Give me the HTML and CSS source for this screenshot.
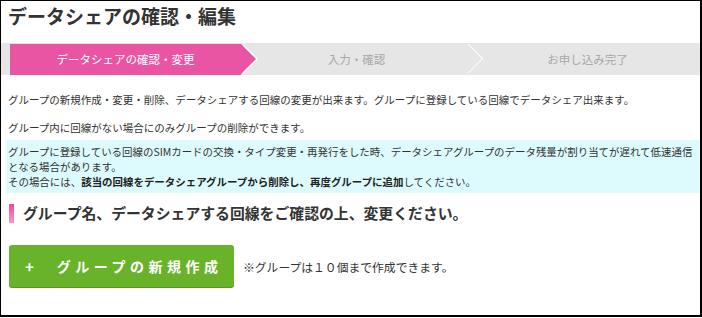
FILE: index.html
```html
<!DOCTYPE html>
<html lang="ja">
<head>
<meta charset="utf-8">
<title>データシェアの確認・編集</title>
<link rel="stylesheet" href="styles.css">
</head>
<body>
<div class="frame">
  <h1 class="title">データシェアの確認・編集</h1>
  <div class="steps">
    <div class="step active">データシェアの確認・変更</div>
    <div class="step sep">入力・確認</div>
    <div class="step">お申し込み完了</div>
  </div>
  <div class="content">
    <p class="para first">グループの新規作成・変更・削除、データシェアする回線の変更が出来ます。グループに登録している回線でデータシェア出来ます。</p>
    <p class="para">グループ内に回線がない場合にのみグループの削除ができます。</p>
    <div class="notice">グループに登録している回線のSIMカードの交換・タイプ変更・再発行をした時、データシェアグループのデータ残量が割り当てが遅れて低速通信<br>となる場合があります。<br>その場合には、<strong>該当の回線をデータシェアグループから削除し、再度グループに追加</strong>してください。</div>
    <h2 class="heading">グループ名、データシェアする回線をご確認の上、変更ください。</h2>
    <div class="actions">
      <button class="btn-create" type="button"><span class="plus">+</span><span class="label">グループの新規作成</span></button>
      <span class="note">※グループは１０個まで作成できます。</span>
    </div>
  </div>
</div>
</body>
</html>
```

FILE: styles.css
```css
html, body {
  margin: 0;
  padding: 0;
  background: #fff;
}

body {
  font-family: "Noto Sans CJK JP", "Noto Sans", sans-serif;
  color: #333;
}

.frame {
  width: 699px;
  height: 314px;
  border-style: solid;
  border-color: #000;
  border-width: 1px 2px 2px 1px;
  overflow: hidden;
}

.title {
  margin: 3px 0 0;
  padding-left: 7px;
  font-size: 19px;
  line-height: 24px;
  font-weight: bold;
  color: #333;
}

.steps {
  margin-top: 15px;
  height: 32px;
  background: #e6e6e6;
  display: flex;
  padding-left: 9px;
  box-sizing: border-box;
  overflow: hidden;
}

.step {
  flex: 0 0 231px;
  margin-top: 1px;
  height: 31px;
  line-height: 31px;
  text-align: center;
  font-size: 11.5px;
  color: #a8a8a8;
  position: relative;
}

.step.active {
  background: #ea55a3;
  color: #fff;
  z-index: 2;
}

.step.active::before,
.step.active::after {
  content: "";
  position: absolute;
  top: 0;
  width: 0;
  height: 0;
  border-top: 15.5px solid transparent;
  border-bottom: 15.5px solid transparent;
}

.step.active::before {
  right: -17px;
  border-left: 15px solid #fff;
}

.step.active::after {
  right: -15px;
  border-left: 15px solid #ea55a3;
}

.step.sep::after {
  content: "";
  position: absolute;
  top: 4px;
  right: -7px;
  width: 21px;
  height: 21px;
  border-top: 1.5px solid #fff;
  border-right: 1.5px solid #fff;
  transform: rotate(45deg);
  box-sizing: border-box;
}

.content {
  padding-left: 7px;
}

.para {
  margin: 13px 0 0;
  font-size: 10.5px;
  line-height: 15px;
  color: #333;
}

.para.first {
  margin-top: 17px;
}

.notice {
  margin: 5px 0 0 -2px;
  padding: 4px 2px;
  background: #ddfbfd;
  font-size: 10.46px;
  line-height: 15px;
  white-space: nowrap;
  color: #333;
}

.notice strong {
  font-weight: bold;
  color: #222;
}

.heading {
  margin: 10px 0 0 1px;
  font-size: 14.85px;
  line-height: 20px;
  font-weight: bold;
  color: #333;
  display: flex;
  align-items: center;
  gap: 9px;
}

.heading::before {
  content: "";
  flex: 0 0 5px;
  height: 19px;
  background: linear-gradient(#ea4a9e, #f699c8);
}

.actions {
  margin: 22px 0 0 1px;
  display: flex;
  align-items: center;
  gap: 9px;
}

.btn-create {
  width: 225px;
  height: 42px;
  border: none;
  border-radius: 3px;
  background: #69b32b;
  box-shadow: 0 1px 0 #55971f;
  color: #fff;
  font-family: "Noto Sans CJK JP", "Noto Sans", sans-serif;
  font-weight: bold;
  font-size: 14px;
  display: flex;
  align-items: center;
  padding: 0 0 0 16px;
  cursor: pointer;
}

.plus {
  font-size: 15px;
  margin-right: 23px;
}

.label {
  letter-spacing: 4.5px;
}

.note {
  font-size: 11.8px;
  color: #333;
}
```
